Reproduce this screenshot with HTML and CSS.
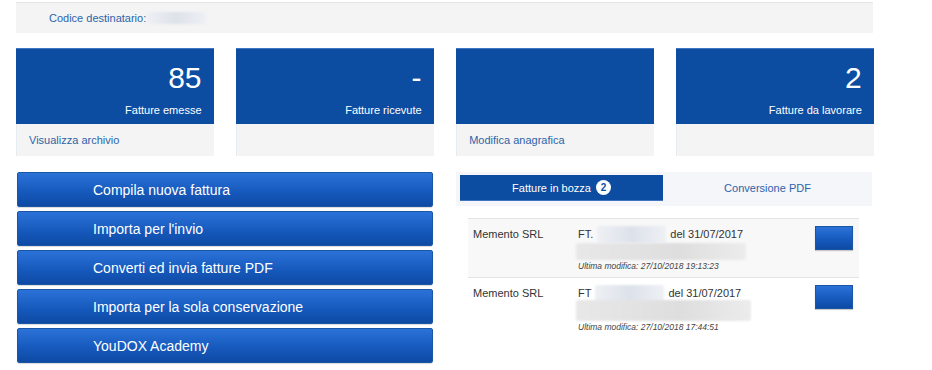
FILE: index.html
```html
<!DOCTYPE html>
<html lang="it">
<head>
<meta charset="utf-8">
<link rel="stylesheet" href="styles.css">
</head>
<body>
<div class="page">
  <div class="topbar">
    <span class="code-label">Codice destinatario:</span><span class="blur blur-code"></span>
  </div>

  <div class="cards">
    <div class="card">
      <div class="card-top"><div class="num">85</div><div class="lbl">Fatture emesse</div></div>
      <div class="card-bottom"><a class="link">Visualizza archivio</a></div>
    </div>
    <div class="card">
      <div class="card-top"><div class="num">-</div><div class="lbl">Fatture ricevute</div></div>
      <div class="card-bottom"></div>
    </div>
    <div class="card">
      <div class="card-top"><div class="num"></div><div class="lbl"></div></div>
      <div class="card-bottom"><a class="link">Modifica anagrafica</a></div>
    </div>
    <div class="card">
      <div class="card-top"><div class="num">2</div><div class="lbl">Fatture da lavorare</div></div>
      <div class="card-bottom"></div>
    </div>
  </div>

  <div class="lower">
    <div class="actions">
      <button class="act">Compila nuova fattura</button>
      <button class="act">Importa per l'invio</button>
      <button class="act">Converti ed invia fatture PDF</button>
      <button class="act">Importa per la sola conservazione</button>
      <button class="act">YouDOX Academy</button>
    </div>
    <div class="panel">
      <div class="tabs">
        <div class="tab active">Fatture in bozza <span class="badge">2</span></div>
        <div class="tab">Conversione PDF</div>
      </div>
      <div class="list">
        <div class="row shaded">
          <div class="who">Memento SRL</div>
          <div class="info">
            <div class="line1">FT. <span class="blur b-num"></span> del 31/07/2017</div>
            <div class="blur b-desc"></div>
            <div class="mod">Ultima modifica: 27/10/2018 19:13:23</div>
          </div>
          <div class="btn-cell"><span class="mini"></span></div>
        </div>
        <div class="row">
          <div class="who">Memento SRL</div>
          <div class="info">
            <div class="line1">FT <span class="blur b-num"></span> del 31/07/2017</div>
            <div class="blur b-desc wide"></div>
            <div class="mod">Ultima modifica: 27/10/2018 17:44:51</div>
          </div>
          <div class="btn-cell"><span class="mini"></span></div>
        </div>
      </div>
    </div>
  </div>
</div>
</body>
</html>
```

FILE: styles.css
```css
* { box-sizing: border-box; }
html, body { margin: 0; padding: 0; background: #fff; }
body { font-family: "Liberation Sans", Arial, sans-serif; }

.page { width: 932px; height: 370px; padding: 2px 0 0 16px; overflow: hidden; }

.topbar {
  width: 857px; height: 31px;
  background: #f4f4f4;
  border-top: 1px solid #e6e6e6;
  display: flex; align-items: center;
  padding-left: 33px;
  font-size: 11px; color: #2e63a8;
}
.blur { display: inline-block; background: linear-gradient(90deg, #eef0f4, #dde2ea 50%, #eef0f4); border-radius: 2px; filter: blur(0.8px); }
.blur-code { width: 59px; height: 12px; margin-left: 1px; }

.cards { display: flex; gap: 22.6px; margin-top: 15px; width: 860px; }
.card { width: 197.5px; height: 108px; display: flex; flex-direction: column; }
.card-top {
  height: 76px; background: #0c4da2;
  border-top: 1px solid #3f74c0;
  color: #fff; text-align: right;
  padding: 12px 12px 0 10px;
}
.num { font-size: 30px; line-height: 34px; height: 34px; }
.lbl { font-size: 11px; margin-top: 8px; line-height: 14px; }
.card-bottom {
  flex: 1; background: #f4f4f4;
  border-left: 1px solid #e6ebf2;
  padding: 10px 0 0 12px;
  font-size: 11px;
}
.link { color: #2e63a8; }

.lower { display: flex; margin-top: 16px; }
.actions { width: 417px; display: flex; flex-direction: column; gap: 4px; padding-left: 1px; }
.act {
  height: 35px; width: 416px;
  border: 1px solid #1b55a6; border-radius: 2px;
  background: linear-gradient(#2b72d8, #1558bb 60%, #0e4aa4);
  color: #fff; font-family: "Liberation Sans", Arial, sans-serif;
  font-size: 14px; text-align: left; padding: 0 0 0 75px;
  box-shadow: 0 1px 1px rgba(0,0,0,0.15);
}

.panel { margin-left: 23px; width: 416px; }
.tabs {
  height: 34px; background: #f4f6fa;
  display: flex; padding: 3px 0 0 4px;
}
.tab {
  width: 203px; height: 26px;
  font-size: 11px; color: #2e63a8;
  display: flex; align-items: center; justify-content: center;
  flex: 1;
}
.tab.active { flex: none; background: #0c4da2; color: #fff; border-bottom: 1px solid #3f74c0; }
.badge {
  display: inline-flex; align-items: center; justify-content: center;
  width: 15px; height: 15px; border-radius: 50%;
  background: #fff; color: #0c4da2; font-weight: bold; font-size: 10px;
  margin-left: 5px;
}

.list { margin: 12px 0 0 12px; width: 391px; }
.row {
  display: flex; height: 59px;
  border-top: 1px solid #e4e4e4;
  font-size: 11px; color: #333;
  padding-top: 6px;
}
.row.shaded { background: #f8f8f8; }
.who { width: 110px; padding-left: 5px; padding-top: 3px; }
.info { width: 235px; }
.line1 { display: flex; align-items: center; height: 18px; font-size: 11px; }
.b-num { width: 69px; height: 17px; margin: 0 4px 0 4px; }
.b-desc { display: block; width: 170px; height: 17px; margin-left: -2px; background: linear-gradient(90deg, #e8e8e8, #dedede 60%, #ececec); }
.b-desc.wide { width: 175px; height: 21px; margin-top: -2px; }
.mod { font-style: italic; font-size: 8.5px; color: #444; margin-top: 1px; }
.btn-cell { flex: 1; display: flex; justify-content: flex-end; padding-right: 6px; padding-top: 1px; }
.mini {
  width: 38px; height: 24px;
  background: linear-gradient(#2b72d8, #1558bb 60%, #0e4aa4);
  border: 1px solid #1b55a6;
  box-shadow: 0 1px 1px rgba(0,0,0,0.2);
}
```
